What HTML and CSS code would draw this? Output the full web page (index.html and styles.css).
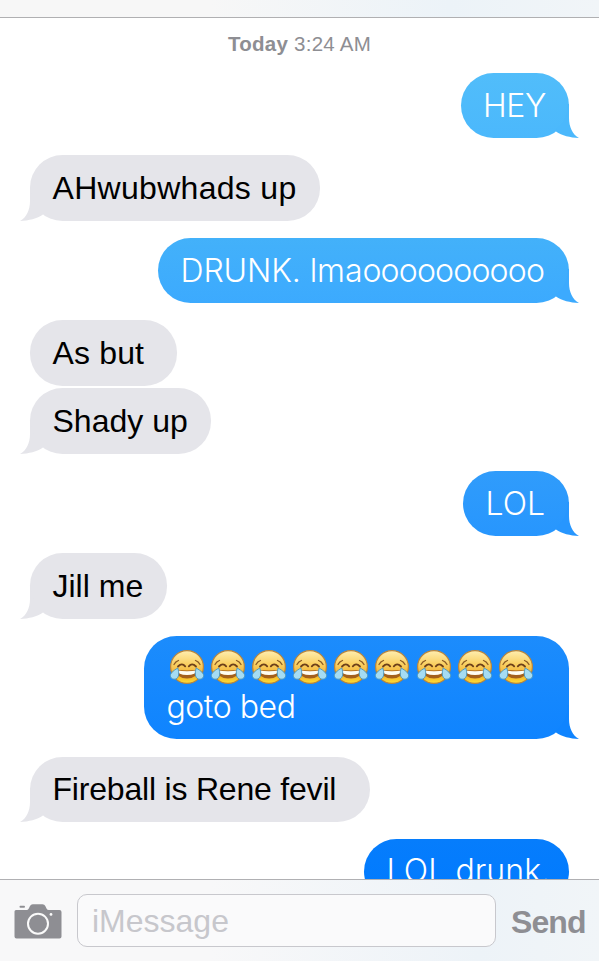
FILE: index.html
```
<!DOCTYPE html>
<html lang="en">
<head>
<meta charset="utf-8">
<title>Messages</title>
<link rel="stylesheet" href="styles.css">
</head>
<body>
<svg class="defs" aria-hidden="true">
  <defs>
    <linearGradient id="face" x1="0" y1="0" x2="0" y2="1">
      <stop offset="0" stop-color="#ffeeb0"/>
      <stop offset=".4" stop-color="#fad164"/>
      <stop offset=".75" stop-color="#f0ae2b"/>
      <stop offset="1" stop-color="#ffdf35"/>
    </linearGradient>
    <symbol id="joy" viewBox="0 0 36 36">
      <circle cx="18" cy="18" r="16.4" fill="url(#face)" stroke="#b9853c" stroke-width="1.2"/>
      <path d="M5 15.500Q6.500 12.500 9.500 11.500M31 15.500Q29.500 12.500 26.500 11.500" fill="none" stroke="#8a5a24" stroke-width="1.300" stroke-linecap="round"/>
      <path d="M9 17.500Q13 13.500 16.200 17.300M19.800 17.300Q23 13.500 27 17.500" fill="none" stroke="#6d401a" stroke-width="1.800" stroke-linecap="round"/>
      <path d="M6.500 20.500Q18 22.500 29.500 20.500Q28 29.500 18 29.500Q8 29.500 6.500 20.500Z" fill="#a4601c"/>
      <path d="M7.500 21.200Q18 23.500 28.500 21.200Q27 25.900 18 26.100Q9 25.900 7.500 21.200Z" fill="#fffdf2"/>
      <path d="M8.800 19Q11.500 27.500 7 30Q2.500 31 1.200 27Q1 23.500 8.800 19ZM27.200 19Q24.500 27.500 29 30Q33.500 31 34.800 27Q35 23.500 27.200 19Z" fill="#a5dcf3" stroke="#4795be" stroke-width=".9"/>
    </symbol>
    <symbol id="tail" viewBox="0 0 30 34">
      <path d="M20 0V14C20 23 23.500 30.500 30 34C21 33.700 13 31.500 7 27.500L6.500 26A31 31 0 0 0 18.500 0Z"/>
    </symbol>
  </defs>
</svg>
<div class="phone">
  <header class="navbar"></header>
  <main class="thread">
    <p class="stamp"><b>Today</b> 3:24 AM</p>
    <div class="bubble sent hey"><span>HEY</span><svg class="tail"><use href="#tail"/></svg></div>
    <div class="bubble received ahw"><span>AHwubwhads up</span><svg class="tail"><use href="#tail"/></svg></div>
    <div class="bubble sent drunk"><span>DRUNK. lma<span class="run">oooooooooo</span></span><svg class="tail"><use href="#tail"/></svg></div>
    <div class="bubble received as-but grouped"><span>As but</span></div>
    <div class="bubble received shady"><span>Shady up</span><svg class="tail"><use href="#tail"/></svg></div>
    <div class="bubble sent lol"><span>LOL</span><svg class="tail"><use href="#tail"/></svg></div>
    <div class="bubble received jill"><span>Jill me</span><svg class="tail"><use href="#tail"/></svg></div>
    <div class="bubble sent bed">
      <div class="emojis">
        <svg><use href="#joy"/></svg><svg><use href="#joy"/></svg><svg><use href="#joy"/></svg>
        <svg><use href="#joy"/></svg><svg><use href="#joy"/></svg><svg><use href="#joy"/></svg>
        <svg><use href="#joy"/></svg><svg><use href="#joy"/></svg><svg><use href="#joy"/></svg>
      </div>
      <span>goto bed</span><svg class="tail"><use href="#tail"/></svg>
    </div>
    <div class="bubble received fireball"><span>Fireball is Rene fevil</span><svg class="tail"><use href="#tail"/></svg></div>
    <div class="bubble sent last"><span>LOL drunk.</span></div>
  </main>
  <footer class="composer">
    <svg class="camera" viewBox="0 0 48 36">
      <path d="M2 7H12.500Q14 7 14.800 5.500L16 3Q16.800 1.300 18.800 1.300H28.500Q30.500 1.300 31.300 3L32.500 5.500Q33.300 7 34.800 7H45.500Q47.500 7 47.500 9V33.500Q47.500 35.500 45.500 35.500H2.500Q.500 35.500 .500 33.500V8.500Q.500 7 2 7Z" fill="#8e8e93"/>
      <rect x="5.500" y="2.800" width="5.500" height="1.900" rx=".9" fill="#8e8e93"/>
      <circle cx="24" cy="20.700" r="10" fill="none" stroke="#fafafa" stroke-width="2"/>
      <circle cx="37" cy="11.400" r="1.400" fill="#fafafa"/>
    </svg>
    <div class="field">iMessage</div>
    <div class="send">Send</div>
  </footer>
</div>
</body>
</html>
```
FILE: styles.css
```
* { box-sizing: border-box; }
body {
  margin: 0;
  background: #fff;
  font-family: "Liberation Sans", Arial, sans-serif;
}
.defs { position: absolute; width: 0; height: 0; }
.phone {
  display: flex;
  flex-direction: column;
  height: 961px;
  overflow: hidden;
}
.navbar {
  flex: none;
  height: 18px;
  border-bottom: 1px solid #b0b0b2;
  background: linear-gradient(90deg, #f7f7f7 35%, #ecf3f8 75%, #f1f5f8);
}
.thread {
  flex: 1;
  min-height: 0;
  overflow: hidden;
  display: flex;
  flex-direction: column;
  padding: 0 30px;
}
.stamp {
  flex: none;
  height: 55px;
  margin: 0;
  padding-top: 14px;
  text-align: center;
  font-size: 20.5px;
  line-height: 24px;
  letter-spacing: .25px;
  color: #8e8e93;
}
.bubble {
  position: relative;
  flex: none;
  height: 65.3px;
  margin-bottom: 17.2px;
  padding: 0 22.5px;
  border-radius: 32.6px;
  font-size: 32px;
  line-height: 66.5px;
  white-space: nowrap;
}
.grouped { margin-bottom: 2.7px; }
.received {
  align-self: flex-start;
  background: #e5e5ea;
  color: #000;
  --tail: #e5e5ea;
}
.sent {
  align-self: flex-end;
  background: linear-gradient(var(--top), var(--tail));
  color: #fff;
  font-family: Inter, "Liberation Sans", sans-serif;
  font-weight: 340;
}
.tail {
  position: absolute;
  right: -10px;
  bottom: 0;
  width: 30px;
  height: 34px;
  fill: var(--tail);
}
.received .tail { right: auto; left: -10px; transform: scaleX(-1); }
.hey { --top: #51bdfa; --tail: #4bb8fc; width: 108.5px; letter-spacing: -.4px; }
.ahw { width: 290px; letter-spacing: .3px; }
.drunk { --top: #43b1fa; --tail: #3caafe; width: 411px; letter-spacing: -.1px; }
.run { letter-spacing: -.8px; }
.as-but { width: 147px; letter-spacing: .15px; }
.shady { width: 181px; }
.lol { --top: #309cfb; --tail: #2796fe; width: 106px; }
.jill { width: 136.5px; }
.bed { --top: #1c8cfc; --tail: #0f84ff; width: 425px; height: 103.5px; letter-spacing: -.45px; }
.fireball { width: 340px; line-height: 65.5px; letter-spacing: -.2px; }
.last { --top: #067dfc; --tail: #007aff; width: 205px; line-height: 64.5px; letter-spacing: .1px; }
.emojis {
  display: flex;
  gap: 5.2px;
  height: 51px;
  padding-top: 13px;
  margin-left: 2px;
}
.emojis svg { flex: none; width: 36px; height: 36px; }
.bed span { display: block; line-height: 40px; }
.composer {
  flex: none;
  display: flex;
  align-items: flex-start;
  height: 82px;
  padding: 14px 0 0 14px;
  border-top: 1px solid #b0b0b3;
  background: linear-gradient(90deg, #f8f8f9 35%, #edf3f8 80%, #f1f5f8);
}
.camera { flex: none; width: 48px; height: 36px; margin-top: 9px; }
.field {
  flex: none;
  width: 419px;
  height: 53px;
  margin-left: 15px;
  padding-left: 14px;
  border: 1px solid #c8c8cd;
  border-radius: 10px;
  background: #fafafb;
  color: #c7c7cc;
  font-size: 32px;
  line-height: 53px;
}
.send {
  margin-left: 15px;
  color: #8e8e93;
  font-size: 32px;
  font-weight: 700;
  line-height: 56px;
  letter-spacing: -.9px;
}
```
